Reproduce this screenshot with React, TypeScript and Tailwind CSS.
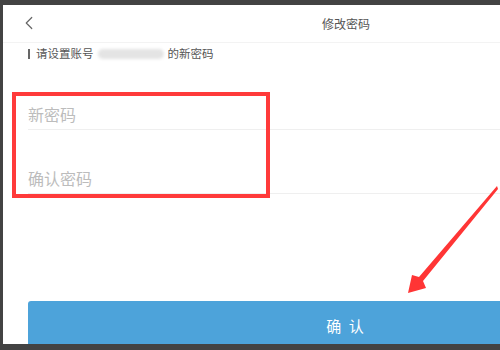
import { ChevronLeft } from 'lucide-react';

const font = { fontFamily: '"Noto Sans CJK SC", "Noto Sans", sans-serif' };

function InputRow({ placeholder }: { placeholder: string }) {
  return (
    <div className="ml-[25px] flex h-[64px] items-end border-b border-[#efefef] pb-[4px]">
      <span className="text-[16px] leading-[22px] text-[#bcbcbc]">{placeholder}</span>
    </div>
  );
}

export default function App() {
  return (
    <div className="relative h-[350px] w-[500px] overflow-hidden bg-[#434343]" style={font}>
      <div className="ml-[3px] mt-[5px] h-[339px] w-[497px] overflow-hidden bg-white">
        <div className="w-[686px]">
          {/* header */}
          <div className="relative flex h-[38px] items-center justify-center border-b border-[#f3f3f3]">
            <ChevronLeft className="absolute left-[15px] top-[7px] h-[22px] w-[22px] text-[#666]" strokeWidth={1.3} />
            <span className="text-[12px] text-[#555]">修改密码</span>
          </div>

          <div className="ml-[25px] mt-[4px] mb-[5px] flex h-[14px] items-center text-[11.5px] text-[#555]">
            <span className="mr-[6px] h-[10px] w-[2px] bg-[#666]" />
            <span>请设置账号</span>
            <span className="mx-[4px] h-[10px] w-[66px] rounded-full bg-[#e4e4e4] blur-[1.5px]" />
            <span>的新密码</span>
          </div>

          <InputRow placeholder="新密码" />
          <InputRow placeholder="确认密码" />

          <div className="mx-[25px] mt-[107px] flex h-[50px] items-center justify-center rounded-t-[3px] bg-[#4da3da] text-[15px] tracking-[2px] text-white">
            确 认
          </div>
        </div>
      </div>

      {/* annotations */}
      <div className="absolute left-[12px] top-[92px] h-[106px] w-[258px] border-[4px] border-[#ff3a3a]" />
      <svg className="absolute left-0 top-0" width="500" height="350" viewBox="0 0 500 350">
        <polygon
          points="497,186 498,189 423,281 426,288 408,293 412,275 419,277"
          fill="#ff3535"
        />
      </svg>
    </div>
  );
}
